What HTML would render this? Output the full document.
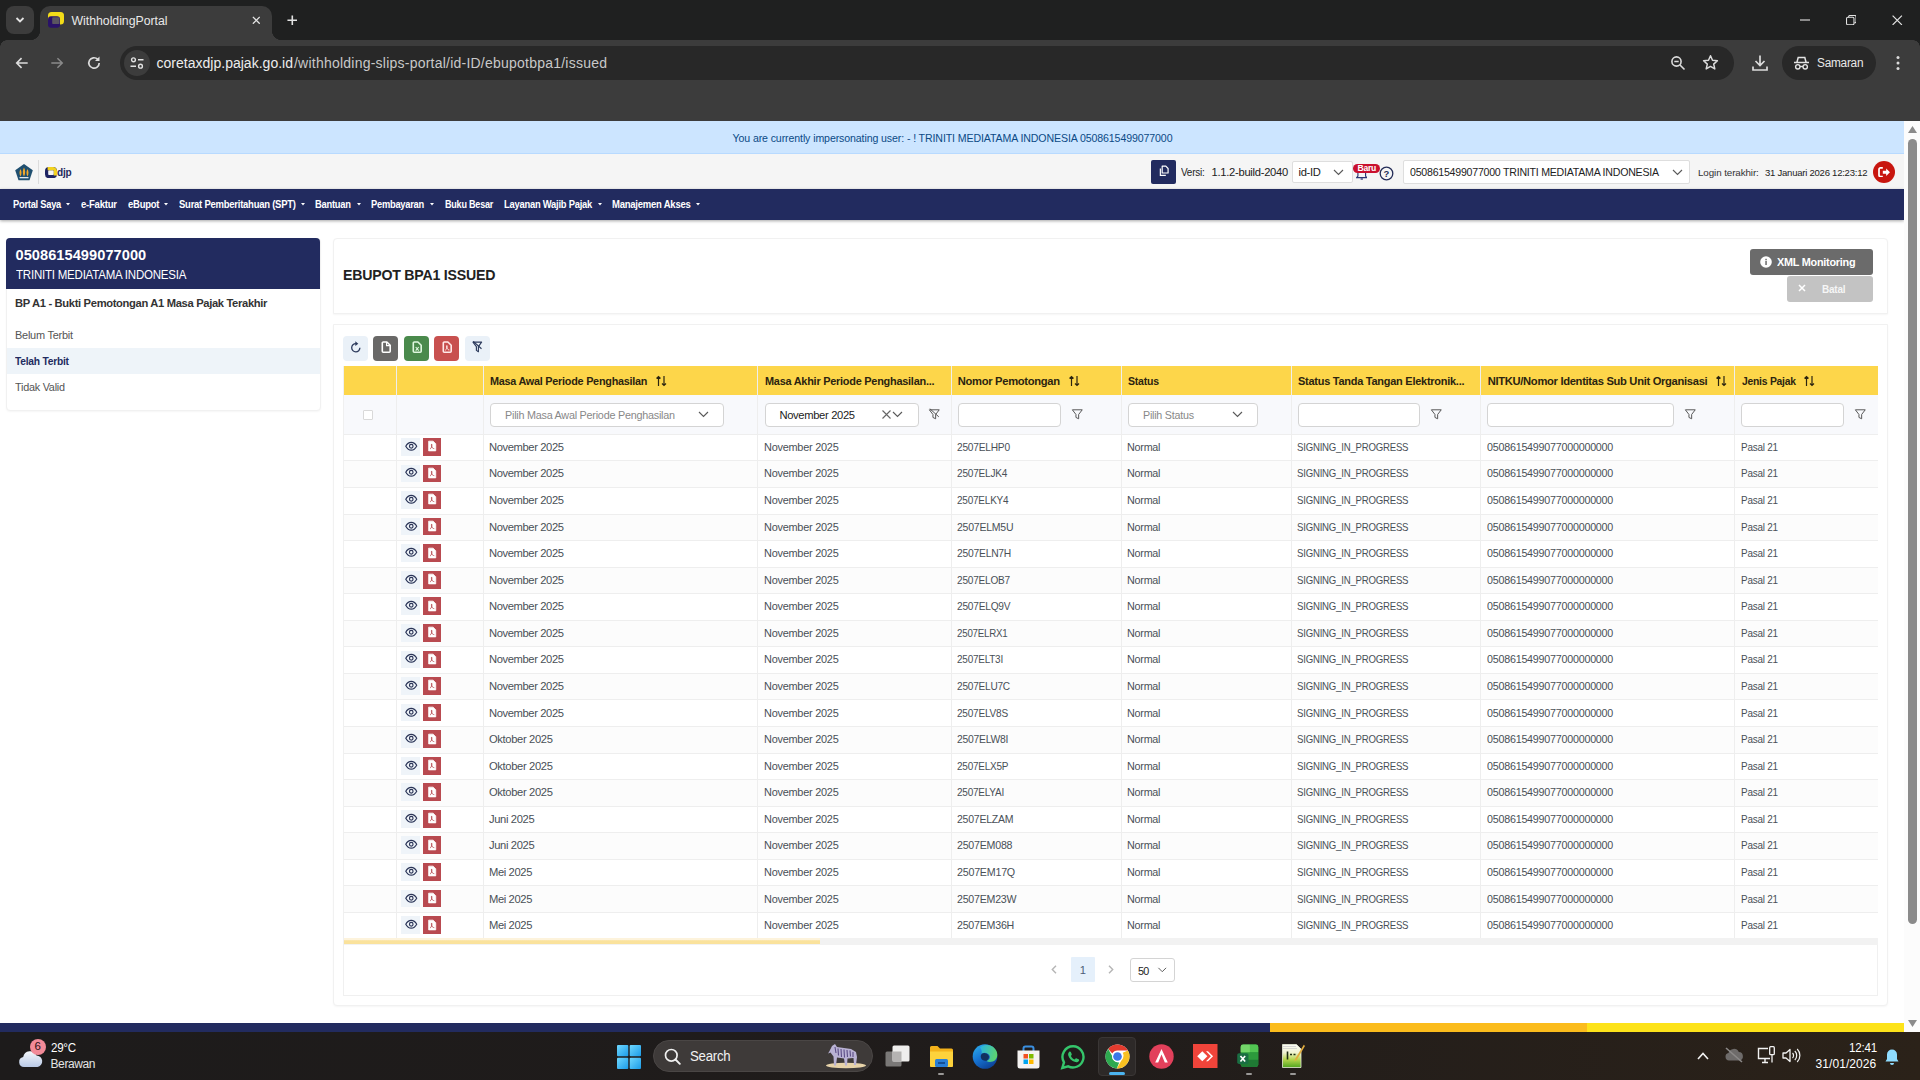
<!DOCTYPE html>
<html lang="id"><head><meta charset="utf-8"><title>WithholdingPortal</title>
<style>
*{box-sizing:border-box;margin:0;padding:0}
html,body{width:1920px;height:1080px;overflow:hidden;background:#fff;font-family:"Liberation Sans",sans-serif;}
body{position:relative}
.abs{position:absolute}
.t{position:absolute;white-space:nowrap;line-height:1}
/* chrome */
#tabstrip{position:absolute;left:0;top:0;width:1920px;height:40px;background:#1f2020}
#toolbar{position:absolute;left:0;top:40px;width:1920px;height:81px;background:#3c3c3c}
#tab{position:absolute;left:40px;top:6px;width:232px;height:34px;background:#3c3c3c;border-radius:10px 10px 0 0}
#tab:before,#tab:after{content:"";position:absolute;bottom:0;width:10px;height:10px;background:radial-gradient(circle at 0 0,transparent 10px,#3c3c3c 10.5px)}
#tab:before{left:-10px}
#tab:after{right:-10px;background:radial-gradient(circle at 100% 0,transparent 10px,#3c3c3c 10.5px)}
#tabsearch{position:absolute;left:6px;top:6px;width:28px;height:28px;border-radius:8px;background:#3c3c3c}
#omni{position:absolute;left:120px;top:46px;width:1614px;height:34px;border-radius:17px;background:#282828}
#siteinfo{position:absolute;left:124px;top:50px;width:26px;height:26px;border-radius:13px;background:#3c3c3c}
#profile{position:absolute;left:1782px;top:46px;width:94px;height:34px;border-radius:17px;background:#282828}
/* page */
#banner{position:absolute;left:0;top:121px;width:1904px;height:33px;background:#cce5ff;border-bottom:1px solid #b8daff}
#hdr{position:absolute;left:0;top:154px;width:1904px;height:35px;background:#f5f5f5}
#nav{position:absolute;left:0;top:189px;width:1904px;height:31px;background:#222b5f;box-shadow:0 1px 3px rgba(0,0,0,.35)}
#nav .t{color:#fff;font-weight:bold;font-size:10px;top:11.2px}
#sb{position:absolute;left:1904px;top:121px;width:16px;height:911px;background:#fcfcfc}
#sbthumb{position:absolute;left:4px;top:18px;width:9px;height:785px;border-radius:5px;background:#8b8b8b}
.card{position:absolute;background:#fff;border:1px solid #f1f1f1;border-radius:4px;box-shadow:0 1px 2px rgba(0,0,0,.04)}
.row{position:absolute;left:344px;width:1534px;height:26.6px;font-size:11.2px;color:#495057}
.row .c{position:absolute;top:7.5px;line-height:1;white-space:nowrap}
.c1{left:145px}.c2{left:420px}.c3{left:613px}.c4{left:783px}.c5{left:953px}.c6{left:1143px}.c7{left:1397px}
.eye{position:absolute;left:57.4px;top:3.6px;width:18.6px;height:17.8px;background:#eff4f9;display:flex;align-items:center;justify-content:center;padding:0 0 1.5px 1.5px}
.pdfb{position:absolute;left:79px;top:3.6px;width:18px;height:17.8px;background:#b94a50;display:flex;align-items:center;justify-content:center;padding-bottom:1.2px}
.vline{position:absolute;top:366px;width:1px;height:573px;background:#eeeeee}
.th{position:absolute;top:376px;font-size:11.2px;font-weight:bold;color:#2b2410;white-space:nowrap;line-height:1}
.inp{position:absolute;top:403px;height:24px;background:#fff;border:1px solid #d4d4d4;border-radius:4px}
.tbtn{position:absolute;top:336px;width:24.700px;height:24.700px;border-radius:4px}
/* taskbar */
#taskbar{position:absolute;left:0;top:1032px;width:1920px;height:48px;background:linear-gradient(90deg,#1d1b1b 0%,#201c1b 55%,#2b2219 100%)}
#taskbar .t{color:#fff}
.hl{position:absolute;left:344px;width:1534px;height:1px;background:#eeeeee}

</style></head><body>
<svg width="0" height="0" style="position:absolute"><defs>
<g id="eyei"><path d="M1 8C3 4.300 5.500 3 8 3s5 1.300 7 5c-2 3.700-4.500 5-7 5S3 11.700 1 8z" fill="none" stroke="#2b3558" stroke-width="1.500"/><circle cx="8" cy="8" r="2.300" fill="none" stroke="#2b3558" stroke-width="1.500"/></g>
<g id="pdfi"><path d="M3.500 1.500h6L13 5v9.500H3.500z" fill="#fff" stroke="#fff" stroke-width="1" stroke-linejoin="round"/><path d="M5.500 12c1.800-1.200 2.700-3.800 2.200-6.500-.7 0-.7 1.800 0 3.500.7 1.700 2 2.500 3.300 2.500" fill="none" stroke="#b2434a" stroke-width="1.100"/></g>
<g id="sorti"><path d="M3.500 12V2.500M1.500 4.500l2-2 2 2M9 2v9.500M7 9.500l2 2 2-2" fill="none" stroke="#2b2410" stroke-width="1.200"/></g>
<g id="filti"><path d="M1.500 2h11L8.500 7.200V12l-3-1.500V7.200z" fill="none" stroke="#555" stroke-width="1.100" stroke-linejoin="round"/></g>
<g id="chev"><path d="M1 1l4.500 4.500L10 1" fill="none" stroke="#5a5a5a" stroke-width="1.150"/></g>
</defs></svg>
<div id="tabstrip">
 <div id="tabsearch"><svg class="abs" style="left:9px;top:10px" width="10" height="8" viewBox="0 0 10 8"><path d="M1.500 2l3.500 3.500L8.500 2" fill="none" stroke="#e3e3e3" stroke-width="1.800"/></svg></div>
 <div id="tab">
  <svg class="abs" style="left:8px;top:5.700px" width="16" height="16" viewBox="0 0 16 16"><rect x="0" y="0" width="16" height="12.500" rx="3.500" fill="#f3dc18"/><rect x="0" y="4.300" width="12" height="11.500" rx="3" fill="#2a1268"/><rect x="4.200" y="5.200" width="7.300" height="6.800" rx="0.800" fill="#5a5560"/><path d="M11.500 4.800v7.500h3" stroke="#f3dc18" stroke-width="0" fill="none"/></svg>
  <span class="t" style="letter-spacing:-0.024px;left:31.500px;top:8.500px;font-size:12.300px;color:#e8e8e8">WithholdingPortal</span>
  <svg class="abs" style="left:211.700px;top:9.700px" width="8.600" height="8.600" viewBox="0 0 10 10"><path d="M1 1l8 8M9 1l-8 8" stroke="#e3e3e3" stroke-width="1.500"/></svg>
 </div>
 <svg class="abs" style="left:286.800px;top:14.900px" width="10.600" height="10.600" viewBox="0 0 12 12"><path d="M6 0.500v11M0.500 6h11" stroke="#e3e3e3" stroke-width="1.800"/></svg>
 <svg class="abs" style="left:1800px;top:19px" width="10" height="2" viewBox="0 0 10 2"><path d="M0 1h10" stroke="#e3e3e3" stroke-width="1.100"/></svg>
 <svg class="abs" style="left:1845.500px;top:14.500px" width="10.500" height="10.500" viewBox="0 0 12 12"><rect x="0.600" y="2.600" width="8.500" height="8.500" rx="1.500" fill="none" stroke="#e3e3e3" stroke-width="1.200"/><path d="M3 2.500V2a1.500 1.500 0 0 1 1.500-1.500H10A1.500 1.500 0 0 1 11.500 2v5.500A1.500 1.500 0 0 1 10 9h-.5" fill="none" stroke="#e3e3e3" stroke-width="1.200"/></svg>
 <svg class="abs" style="left:1892px;top:14.500px" width="10.500" height="10.500" viewBox="0 0 12 12"><path d="M0.700 0.700l10.600 10.600M11.300 0.700L0.700 11.300" stroke="#e3e3e3" stroke-width="1.400"/></svg>
</div>
<div id="toolbar"></div>
<div class="abs" style="left:0;top:40px;width:7px;height:7px;background:radial-gradient(circle at 100% 100%,transparent 6.500px,#1f2020 7px)"></div><div class="abs" style="left:1913px;top:40px;width:7px;height:7px;background:radial-gradient(circle at 0 100%,transparent 6.500px,#1f2020 7px)"></div>
<svg class="abs" style="left:15px;top:56px" width="14" height="14" viewBox="0 0 16 16"><path d="M14.500 8H2M7.500 2.500L2 8l5.500 5.500" fill="none" stroke="#dcdcdc" stroke-width="1.900"/></svg>
<svg class="abs" style="left:50px;top:56px" width="14" height="14" viewBox="0 0 16 16"><path d="M1.500 8H14M8.500 2.500L14 8l-5.500 5.500" fill="none" stroke="#8a8a8a" stroke-width="1.700"/></svg>
<svg class="abs" style="left:86px;top:55px" width="16" height="16" viewBox="0 0 16 16"><path d="M13.200 8A5.200 5.200 0 1 1 11.600 4.200" fill="none" stroke="#dcdcdc" stroke-width="1.700"/><path d="M13.500 1.500v4.500H9z" fill="#dcdcdc"/></svg>
<div id="omni"></div>
<div id="siteinfo"><svg class="abs" style="left:6px;top:6px" width="14" height="14" viewBox="0 0 14 14"><circle cx="3.500" cy="3.800" r="1.900" fill="none" stroke="#e3e3e3" stroke-width="1.400"/><path d="M8 3.800h5.500M0.500 10.200H6" stroke="#e3e3e3" stroke-width="1.400"/><circle cx="10.500" cy="10.200" r="1.900" fill="none" stroke="#e3e3e3" stroke-width="1.400"/></svg></div>
<span class="t" style="letter-spacing:0.014px;left:156.500px;top:56px;font-size:14px;color:#ededed">coretaxdjp.pajak.go.id</span><span class="t" style="letter-spacing:0.230px;left:294px;top:56px;font-size:14px;color:#c9c9c9">/withholding-slips-portal/id-ID/ebupotbpa1/issued</span>
<svg class="abs" style="left:1670px;top:55px" width="16" height="16" viewBox="0 0 16 16"><circle cx="6.500" cy="6.500" r="4.600" fill="none" stroke="#dcdcdc" stroke-width="1.600"/><path d="M10 10l4.500 4.500M4.300 6.500h4.400" stroke="#dcdcdc" stroke-width="1.600"/></svg>
<svg class="abs" style="left:1702px;top:54px" width="17" height="17" viewBox="0 0 17 17"><path d="M8.500 1.800l2 4.500 4.900.5-3.700 3.300 1.100 4.800-4.300-2.500-4.300 2.500 1.100-4.800L1.600 6.800l4.900-.5z" fill="none" stroke="#dcdcdc" stroke-width="1.500" stroke-linejoin="round"/></svg>
<svg class="abs" style="left:1751px;top:54px" width="18" height="18" viewBox="0 0 18 18"><path d="M9 1.500v9.500M4.500 7L9 11.500 13.500 7M2 12.500v3.500h14v-3.500" fill="none" stroke="#dcdcdc" stroke-width="1.700"/></svg>
<div id="profile">
 <svg class="abs" style="left:11px;top:9px" width="17" height="16" viewBox="0 0 17 16"><path d="M1 7.500h15M4 7l1.200-4.500h6.600L13 7" fill="none" stroke="#e3e3e3" stroke-width="1.500"/><circle cx="4.800" cy="11.800" r="2.200" fill="none" stroke="#e3e3e3" stroke-width="1.400"/><circle cx="12.200" cy="11.800" r="2.200" fill="none" stroke="#e3e3e3" stroke-width="1.400"/><path d="M7 11.500h3" stroke="#e3e3e3" stroke-width="1.400"/></svg>
 <span class="t" style="letter-spacing:-0.25px;transform-origin:0 0;transform:scaleX(0.9606);left:35px;top:10.500px;font-size:12.300px;color:#e8e8e8">Samaran</span>
</div>
<svg class="abs" style="left:1896px;top:55px" width="4" height="16" viewBox="0 0 4 16"><circle cx="2" cy="2.500" r="1.500" fill="#dcdcdc"/><circle cx="2" cy="8" r="1.500" fill="#dcdcdc"/><circle cx="2" cy="13.500" r="1.500" fill="#dcdcdc"/></svg>

<div id="banner"><span class="t" style="letter-spacing:-0.111px;left:732.500px;top:12px;font-size:10.600px;color:#0b4a86">You are currently impersonating user: - ! TRINITI MEDIATAMA INDONESIA 0508615499077000</span></div>
<div id="hdr"></div>
<!-- header logos -->
<svg class="abs" style="left:14.500px;top:164px" width="18" height="16.500" viewBox="0 0 18 16.500"><path d="M9 0L17.800 6.300 14.500 16.300H3.500L.200 6.300z" fill="#1f4f70"/><path d="M5.500 5c1.200 2 1.500 5 0 7.500-1.500-2.500-1.200-5.500 0-7.500zM9 3.500c1.400 2.500 1.700 6 0 9-1.700-3-1.400-6.500 0-9zM12.500 5c1.200 2 1.500 5 0 7.500-1.500-2.500-1.200-5.500 0-7.500z" fill="#f0a92c"/><rect x="4.500" y="13" width="9" height="1.300" fill="#dfe8ee"/></svg>
<div class="abs" style="left:38px;top:160px;width:1px;height:23.500px;background:#dcdcdc"></div>
<svg class="abs" style="left:45px;top:166.500px" width="12" height="11.300" viewBox="0 0 12 11.300"><rect x="1.600" y="1.700" width="8.800" height="7.900" rx="2.400" fill="none" stroke="#1d2363" stroke-width="3.200"/><path d="M2.600 1.700h5.400a2.400 2.400 0 0 1 2.400 2.400v4.400" fill="none" stroke="#f2d21f" stroke-width="3.200"/></svg>
<span class="t" style="letter-spacing:-0.25px;transform-origin:0 0;transform:scaleX(0.9574);left:57.300px;top:166.500px;font-size:10.500px;font-weight:bold;color:#23295e">djp</span>
<!-- header right -->
<div class="abs" style="left:1151px;top:160px;width:25px;height:24px;border-radius:2px;background:#222b5f"><svg class="abs" style="left:7.500px;top:5px" width="10" height="11.500" viewBox="0 0 11 12"><path d="M3.500 1h4l2.500 2.500V8.500h-6.500z" fill="none" stroke="#fff" stroke-width="1.300" stroke-linejoin="round"/><path d="M1.500 3.500V11H7.500" fill="none" stroke="#fff" stroke-width="1.300"/></svg></div>
<span class="t" style="letter-spacing:-0.25px;transform-origin:0 0;transform:scaleX(0.8902);left:1181px;top:167px;font-size:11.200px;color:#222">Versi:</span>
<span class="t" style="letter-spacing:-0.277px;left:1211.500px;top:167px;font-size:11.200px;color:#222">1.1.2-build-2040</span>
<div class="abs" style="left:1292px;top:161px;width:61px;height:22px;background:#fff;border:1px solid #dedede;border-radius:2px"><span class="t" style="letter-spacing:-0.306px;left:5.500px;top:5px;font-size:11.200px;color:#222">id-ID</span><svg class="abs" style="left:40px;top:7px" width="11" height="7" viewBox="0 0 11 7"><use href="#chev"/></svg></div>
<svg class="abs" style="left:1355.500px;top:166.700px" width="11.500" height="13.500" viewBox="0 0 12 14"><path d="M2 9.500V6a4 4 0 0 1 8 0v3.500l1.200 1.500H.8z" fill="none" stroke="#2a3572" stroke-width="1.200"/><path d="M4.800 12.500h2.400" stroke="#2a3572" stroke-width="1.300"/></svg>
<div class="abs" style="left:1353.300px;top:164px;width:26.300px;height:9px;border-radius:5px;background:#c9102e"><span class="t" style="left:4.300px;top:0px;font-size:8.600px;font-weight:bold;color:#fff;letter-spacing:-0.300px">Baru</span></div>
<svg class="abs" style="left:1379px;top:166px" width="15" height="15" viewBox="0 0 15 15"><circle cx="7.500" cy="7.500" r="6.300" fill="none" stroke="#242d58" stroke-width="1.300"/><text x="7.500" y="11" font-size="9.500" font-weight="bold" font-family="Liberation Sans,sans-serif" fill="#242d58" text-anchor="middle">?</text></svg>
<div class="abs" style="left:1403px;top:160px;width:287px;height:24px;background:#fff;border:1px solid #dedede;border-radius:2px"><span class="t" style="letter-spacing:-0.25px;transform-origin:0 0;transform:scaleX(0.9473);left:6px;top:6px;font-size:11.200px;color:#222">0508615499077000 TRINITI MEDIATAMA INDONESIA</span><svg class="abs" style="left:268px;top:8px" width="11" height="7" viewBox="0 0 11 7"><use href="#chev"/></svg></div>
<span class="t" style="letter-spacing:-0.092px;left:1698px;top:167.700px;font-size:9.800px;color:#333">Login terakhir:</span>
<span class="t" style="letter-spacing:-0.25px;transform-origin:0 0;transform:scaleX(0.9727);left:1764.500px;top:167.700px;font-size:9.800px;color:#222">31 Januari 2026 12:23:12</span>
<div class="abs" style="left:1873px;top:161px;width:21.500px;height:21.500px;border-radius:11px;background:#c8160f"><svg class="abs" style="left:4.500px;top:5.500px" width="12.500" height="10.500" viewBox="0 0 13 11"><path d="M5 1H2.500A1.500 1.500 0 0 0 1 2.500v6A1.500 1.500 0 0 0 2.500 10H5" fill="none" stroke="#fff" stroke-width="1.800"/><path d="M5 4h3.500V1.500L12.500 5.500 8.500 9.500V7H5z" fill="#fff"/></svg></div>
<!-- nav -->
<div id="nav">
<span class="t" style="letter-spacing:-0.25px;transform-origin:0 0;transform:scaleX(0.9291);left:12.5px">Portal Saya</span><svg class="abs" style="left:66.3px;top:14px" width="4" height="2.500" viewBox="0 0 5 3"><path d="M0 0h5L2.500 3z" fill="#fff"/></svg>
<span class="t" style="letter-spacing:-0.25px;transform-origin:0 0;transform:scaleX(0.9548);left:81.0px">e-Faktur</span>
<span class="t" style="letter-spacing:-0.25px;transform-origin:0 0;transform:scaleX(0.9487);left:127.5px">eBupot</span><svg class="abs" style="left:164.3px;top:14px" width="4" height="2.500" viewBox="0 0 5 3"><path d="M0 0h5L2.500 3z" fill="#fff"/></svg>
<span class="t" style="letter-spacing:-0.25px;transform-origin:0 0;transform:scaleX(0.9476);left:178.8px">Surat Pemberitahuan (SPT)</span><svg class="abs" style="left:301px;top:14px" width="4" height="2.500" viewBox="0 0 5 3"><path d="M0 0h5L2.500 3z" fill="#fff"/></svg>
<span class="t" style="letter-spacing:-0.25px;transform-origin:0 0;transform:scaleX(0.9351);left:315.3px">Bantuan</span><svg class="abs" style="left:357px;top:14px" width="4" height="2.500" viewBox="0 0 5 3"><path d="M0 0h5L2.500 3z" fill="#fff"/></svg>
<span class="t" style="letter-spacing:-0.25px;transform-origin:0 0;transform:scaleX(0.9295);left:371.3px">Pembayaran</span><svg class="abs" style="left:430px;top:14px" width="4" height="2.500" viewBox="0 0 5 3"><path d="M0 0h5L2.500 3z" fill="#fff"/></svg>
<span class="t" style="letter-spacing:-0.25px;transform-origin:0 0;transform:scaleX(0.9057);left:444.5px">Buku Besar</span>
<span class="t" style="letter-spacing:-0.25px;transform-origin:0 0;transform:scaleX(0.9377);left:503.8px">Layanan Wajib Pajak</span><svg class="abs" style="left:598.3px;top:14px" width="4" height="2.500" viewBox="0 0 5 3"><path d="M0 0h5L2.500 3z" fill="#fff"/></svg>
<span class="t" style="letter-spacing:-0.25px;transform-origin:0 0;transform:scaleX(0.9512);left:612.0px">Manajemen Akses</span><svg class="abs" style="left:696.3px;top:14px" width="4" height="2.500" viewBox="0 0 5 3"><path d="M0 0h5L2.500 3z" fill="#fff"/></svg>
</div>
<!-- scrollbar -->
<div id="sb"><div id="sbthumb"></div>
<svg class="abs" style="left:4px;top:5px" width="9" height="7" viewBox="0 0 9 7"><path d="M4.500 0L9 7H0z" fill="#8b8b8b"/></svg>
<svg class="abs" style="left:4px;top:899px" width="9" height="7" viewBox="0 0 9 7"><path d="M0 0h9L4.500 7z" fill="#8b8b8b"/></svg>
</div>
<!-- sidebar -->
<div class="card" style="left:6px;top:238px;width:315px;height:173px"></div>
<div class="abs" style="left:6px;top:238px;width:314px;height:50.700px;background:#222b5f;border-radius:4px 4px 0 0"></div>
<span class="t" style="letter-spacing:0.055px;left:15.500px;top:248px;font-size:14.600px;font-weight:bold;color:#fff">0508615499077000</span>
<span class="t" style="letter-spacing:-0.25px;transform-origin:0 0;transform:scaleX(0.9003);left:15.500px;top:268.500px;font-size:12.800px;color:#fff">TRINITI MEDIATAMA INDONESIA</span>
<span class="t" style="letter-spacing:-0.338px;left:15px;top:298px;font-size:11.200px;font-weight:bold;color:#333">BP A1 - Bukti Pemotongan A1 Masa Pajak Terakhir</span>
<span class="t" style="letter-spacing:-0.25px;transform-origin:0 0;transform:scaleX(0.9792);left:15px;top:329.500px;font-size:11.200px;color:#555">Belum Terbit</span>
<div class="abs" style="left:7px;top:348px;width:313px;height:26px;background:#eef4f9"></div>
<span class="t" style="letter-spacing:-0.25px;transform-origin:0 0;transform:scaleX(0.9153);left:15px;top:356px;font-size:11.200px;font-weight:bold;color:#222b5f">Telah Terbit</span>
<span class="t" style="letter-spacing:-0.25px;transform-origin:0 0;transform:scaleX(0.9688);left:15px;top:381.500px;font-size:11.200px;color:#555">Tidak Valid</span>
<!-- main cards -->
<div class="card" style="left:333px;top:238px;width:1555px;height:76px;border-radius:4px 4px 0 0"></div>
<div class="card" style="left:333px;top:324px;width:1555px;height:682px;border-radius:0 0 4px 4px"></div>
<div class="abs" style="left:343px;top:366px;width:1535px;height:630px;border:1px solid #f0f0f0;border-top:0"></div>
<span class="t" style="letter-spacing:-0.25px;transform-origin:0 0;transform:scaleX(0.9200);left:342.500px;top:267.200px;font-size:15.400px;font-weight:bold;color:#222">EBUPOT BPA1 ISSUED</span>
<div class="abs" style="left:1750px;top:249px;width:123px;height:25.800px;border-radius:3px;background:#6b6b6b"><svg class="abs" style="left:10px;top:7px" width="12" height="12" viewBox="0 0 12 12"><circle cx="6" cy="6" r="5.800" fill="#fff"/><rect x="5.300" y="5" width="1.500" height="4" fill="#6b6b6b"/><rect x="5.300" y="2.800" width="1.500" height="1.500" fill="#6b6b6b"/></svg><span class="t" style="letter-spacing:-0.25px;transform-origin:0 0;transform:scaleX(0.9696);left:26.500px;top:7.500px;font-size:11.200px;font-weight:bold;color:#fff">XML Monitoring</span></div>
<div class="abs" style="left:1787px;top:276px;width:86px;height:25.800px;border-radius:3px;background:#c3c3c3"><svg class="abs" style="left:11px;top:8px" width="8" height="8" viewBox="0 0 8 8"><path d="M1 1l6 6M7 1L1 7" stroke="#fff" stroke-width="1.500"/></svg><span class="t" style="letter-spacing:-0.25px;transform-origin:0 0;transform:scaleX(0.8915);left:35px;top:8px;font-size:11.200px;font-weight:bold;color:#f6f6f6">Batal</span></div>
<!-- toolbar buttons -->
<div class="tbtn" style="left:343px;background:#eaf1f8"><svg class="abs" style="left:7.600px;top:5.200px" width="10" height="11.600" viewBox="0 0 10 11.600"><path d="M8.900 6.800A4.100 4.100 0 1 1 4.900 2.700" fill="none" stroke="#2c3a5c" stroke-width="1.300"/><path d="M4.300 0.300L7.300 2.700 4.300 5.100z" fill="#2c3a5c"/></svg></div>
<div class="tbtn" style="left:373px;background:#696867"><svg class="abs" style="left:8.300px;top:4.700px" width="10.200" height="12.200" viewBox="0 0 10.200 12.200"><path d="M2.300 1h3.600l3.300 3.300v5.900a1 1 0 0 1-1 1H2.300a1 1 0 0 1-1-1V2a1 1 0 0 1 1-1z" fill="none" stroke="#fff" stroke-width="1.600" stroke-linejoin="round"/><path d="M5.600 1v3.600h3.600" fill="none" stroke="#fff" stroke-width="1.200"/></svg></div>
<div class="tbtn" style="left:404px;background:#4a8a4c"><svg class="abs" style="left:8.300px;top:4.700px" width="10.200" height="12.200" viewBox="0 0 10.200 12.200"><path d="M2.300 1h3.600l3.300 3.300v5.900a1 1 0 0 1-1 1H2.300a1 1 0 0 1-1-1V2a1 1 0 0 1 1-1z" fill="none" stroke="#dff7df" stroke-width="1.600" stroke-linejoin="round"/><path d="M3.700 6l3 3.600M6.700 6l-3 3.600" stroke="#dff7df" stroke-width="1.100"/></svg></div>
<div class="tbtn" style="left:434px;background:#c8504f"><svg class="abs" style="left:8.300px;top:4.700px" width="10.200" height="12.200" viewBox="0 0 10.200 12.200"><path d="M2.300 1h3.600l3.300 3.300v5.900a1 1 0 0 1-1 1H2.300a1 1 0 0 1-1-1V2a1 1 0 0 1 1-1z" fill="none" stroke="#ffe9e9" stroke-width="1.600" stroke-linejoin="round"/><path d="M3.300 9.300c1.300-.9 2-2.700 1.700-4.800-.5 0-.5 1.300 0 2.600.5 1.200 1.400 1.900 2.400 1.900" fill="none" stroke="#ffe9e9" stroke-width="1"/></svg></div>
<div class="tbtn" style="left:465px;background:#eaf1f8"><svg class="abs" style="left:6.600px;top:5px" width="11" height="11.800" viewBox="0 0 11 11.800"><path d="M1 1.200h8.600L6.400 5.600v5.200L4.400 9.400V5.600z" fill="none" stroke="#2c3a5c" stroke-width="1.150" stroke-linejoin="round"/><path d="M1.200 .400l8.300 7.400" stroke="#2c3a5c" stroke-width="1.150"/></svg></div>
<!-- table header -->
<div class="abs" style="left:344px;top:366px;width:1534px;height:29px;background:#fdd64a"></div>
<div class="abs" style="left:344px;top:395px;width:1534px;height:39.400px;background:#f8f9fc"></div>
<span class="th" style="letter-spacing:-0.25px;transform-origin:0 0;transform:scaleX(0.9677);left:489.7px">Masa Awal Periode Penghasilan</span><svg class="abs" style="left:654.5px;top:374.200px" width="13" height="14" viewBox="0 0 13 14"><use href="#sorti"/></svg>
<span class="th" style="letter-spacing:-0.25px;transform-origin:0 0;transform:scaleX(0.9755);left:764.7px">Masa Akhir Periode Penghasilan...</span>
<span class="th" style="letter-spacing:-0.300px;left:957.7px">Nomor Pemotongan</span><svg class="abs" style="left:1067.8px;top:374.200px" width="13" height="14" viewBox="0 0 13 14"><use href="#sorti"/></svg>
<span class="th" style="letter-spacing:-0.25px;transform-origin:0 0;transform:scaleX(0.9407);left:1127.7px">Status</span>
<span class="th" style="letter-spacing:-0.25px;transform-origin:0 0;transform:scaleX(0.9794);left:1297.7px">Status Tanda Tangan Elektronik...</span>
<span class="th" style="letter-spacing:-0.312px;left:1487.7px">NITKU/Nomor Identitas Sub Unit Organisasi</span><svg class="abs" style="left:1715.3px;top:374.200px" width="13" height="14" viewBox="0 0 13 14"><use href="#sorti"/></svg>
<span class="th" style="letter-spacing:-0.25px;transform-origin:0 0;transform:scaleX(0.9238);left:1741.7px">Jenis Pajak</span><svg class="abs" style="left:1802.8px;top:374.200px" width="13" height="14" viewBox="0 0 13 14"><use href="#sorti"/></svg>
<!-- filter row -->
<div class="abs" style="left:363px;top:410px;width:10px;height:10px;border:1px solid #d9d9d9;background:#fff;border-radius:1px"></div>
<div class="inp" style="left:490px;width:233.7px"><span class="t" style="letter-spacing:-0.25px;transform-origin:0 0;transform:scaleX(0.9659);left:13.500px;top:6px;font-size:11.200px;color:#888">Pilih Masa Awal Periode Penghasilan</span><svg class="abs" style="left:207px;top:7px" width="11" height="7" viewBox="0 0 11 7"><use href="#chev"/></svg></div>
<div class="inp" style="left:765px;width:153.5px"><span class="t" style="letter-spacing:-0.342px;left:13.500px;top:6px;font-size:11.200px;color:#222">November 2025</span><svg class="abs" style="left:116px;top:5.800px" width="9" height="9" viewBox="0 0 9 9"><path d="M.5.5l8 8M8.500.5l-8 8" stroke="#666" stroke-width="1.100"/></svg><svg class="abs" style="left:126px;top:7px" width="11" height="7" viewBox="0 0 11 7"><use href="#chev"/></svg></div>
<svg class="abs" style="left:927.8px;top:407.800px" width="12.600" height="12.600" viewBox="0 0 14 14"><use href="#filti"/><path d="M2 .8l10 9" stroke="#555" stroke-width="1.100"/></svg>
<div class="inp" style="left:958px;width:102.7px"></div><svg class="abs" style="left:1070.8px;top:407.800px" width="12.600" height="12.600" viewBox="0 0 14 14"><use href="#filti"/></svg>
<div class="inp" style="left:1128px;width:129.7px"><span class="t" style="letter-spacing:-0.25px;transform-origin:0 0;transform:scaleX(0.9583);left:14px;top:6px;font-size:11.200px;color:#888">Pilih Status</span><svg class="abs" style="left:103px;top:7px" width="11" height="7" viewBox="0 0 11 7"><use href="#chev"/></svg></div>
<div class="inp" style="left:1298px;width:121.7px"></div><svg class="abs" style="left:1429.8px;top:407.800px" width="12.600" height="12.600" viewBox="0 0 14 14"><use href="#filti"/></svg>
<div class="inp" style="left:1487px;width:186.7px"></div><svg class="abs" style="left:1683.8px;top:407.800px" width="12.600" height="12.600" viewBox="0 0 14 14"><use href="#filti"/></svg>
<div class="inp" style="left:1741px;width:102.7px"></div><svg class="abs" style="left:1853.8px;top:407.800px" width="12.600" height="12.600" viewBox="0 0 14 14"><use href="#filti"/></svg>
<div class="row" style="top:434.40px;background:#fff">
<span class="eye"><svg viewBox="0 0 16 16" width="12.5" height="12.5"><use href="#eyei"/></svg></span>
<span class="pdfb"><svg viewBox="0 0 16 16" width="12" height="12"><use href="#pdfi"/></svg></span>
<span class="c c1" style="letter-spacing:-0.385px;">November 2025</span><span class="c c2" style="letter-spacing:-0.25px;transform-origin:0 0;transform:scaleX(0.9751);">November 2025</span><span class="c c3" style="letter-spacing:-0.25px;transform-origin:0 0;transform:scaleX(0.9101);">2507ELHP0</span><span class="c c4" style="letter-spacing:-0.25px;transform-origin:0 0;transform:scaleX(0.9623);">Normal</span><span class="c c5" style="letter-spacing:-0.25px;transform-origin:0 0;transform:scaleX(0.8590);">SIGNING_IN_PROGRESS</span><span class="c c6" style="letter-spacing:-0.25px;transform-origin:0 0;transform:scaleX(0.9594);">0508615499077000000000</span><span class="c c7" style="letter-spacing:-0.25px;transform-origin:0 0;transform:scaleX(0.8852);">Pasal 21</span></div>
<div class="row" style="top:460.97px;background:#fcfcfc">
<span class="eye"><svg viewBox="0 0 16 16" width="12.5" height="12.5"><use href="#eyei"/></svg></span>
<span class="pdfb"><svg viewBox="0 0 16 16" width="12" height="12"><use href="#pdfi"/></svg></span>
<span class="c c1" style="letter-spacing:-0.385px;">November 2025</span><span class="c c2" style="letter-spacing:-0.25px;transform-origin:0 0;transform:scaleX(0.9751);">November 2025</span><span class="c c3" style="letter-spacing:-0.25px;transform-origin:0 0;transform:scaleX(0.9005);">2507ELJK4</span><span class="c c4" style="letter-spacing:-0.25px;transform-origin:0 0;transform:scaleX(0.9623);">Normal</span><span class="c c5" style="letter-spacing:-0.25px;transform-origin:0 0;transform:scaleX(0.8590);">SIGNING_IN_PROGRESS</span><span class="c c6" style="letter-spacing:-0.25px;transform-origin:0 0;transform:scaleX(0.9594);">0508615499077000000000</span><span class="c c7" style="letter-spacing:-0.25px;transform-origin:0 0;transform:scaleX(0.8852);">Pasal 21</span></div>
<div class="row" style="top:487.53px;background:#fff">
<span class="eye"><svg viewBox="0 0 16 16" width="12.5" height="12.5"><use href="#eyei"/></svg></span>
<span class="pdfb"><svg viewBox="0 0 16 16" width="12" height="12"><use href="#pdfi"/></svg></span>
<span class="c c1" style="letter-spacing:-0.385px;">November 2025</span><span class="c c2" style="letter-spacing:-0.25px;transform-origin:0 0;transform:scaleX(0.9751);">November 2025</span><span class="c c3" style="letter-spacing:-0.25px;transform-origin:0 0;transform:scaleX(0.8940);">2507ELKY4</span><span class="c c4" style="letter-spacing:-0.25px;transform-origin:0 0;transform:scaleX(0.9623);">Normal</span><span class="c c5" style="letter-spacing:-0.25px;transform-origin:0 0;transform:scaleX(0.8590);">SIGNING_IN_PROGRESS</span><span class="c c6" style="letter-spacing:-0.25px;transform-origin:0 0;transform:scaleX(0.9594);">0508615499077000000000</span><span class="c c7" style="letter-spacing:-0.25px;transform-origin:0 0;transform:scaleX(0.8852);">Pasal 21</span></div>
<div class="row" style="top:514.10px;background:#fcfcfc">
<span class="eye"><svg viewBox="0 0 16 16" width="12.5" height="12.5"><use href="#eyei"/></svg></span>
<span class="pdfb"><svg viewBox="0 0 16 16" width="12" height="12"><use href="#pdfi"/></svg></span>
<span class="c c1" style="letter-spacing:-0.385px;">November 2025</span><span class="c c2" style="letter-spacing:-0.25px;transform-origin:0 0;transform:scaleX(0.9751);">November 2025</span><span class="c c3" style="letter-spacing:-0.25px;transform-origin:0 0;transform:scaleX(0.9385);">2507ELM5U</span><span class="c c4" style="letter-spacing:-0.25px;transform-origin:0 0;transform:scaleX(0.9623);">Normal</span><span class="c c5" style="letter-spacing:-0.25px;transform-origin:0 0;transform:scaleX(0.8590);">SIGNING_IN_PROGRESS</span><span class="c c6" style="letter-spacing:-0.25px;transform-origin:0 0;transform:scaleX(0.9594);">0508615499077000000000</span><span class="c c7" style="letter-spacing:-0.25px;transform-origin:0 0;transform:scaleX(0.8852);">Pasal 21</span></div>
<div class="row" style="top:540.67px;background:#fff">
<span class="eye"><svg viewBox="0 0 16 16" width="12.5" height="12.5"><use href="#eyei"/></svg></span>
<span class="pdfb"><svg viewBox="0 0 16 16" width="12" height="12"><use href="#pdfi"/></svg></span>
<span class="c c1" style="letter-spacing:-0.385px;">November 2025</span><span class="c c2" style="letter-spacing:-0.25px;transform-origin:0 0;transform:scaleX(0.9751);">November 2025</span><span class="c c3" style="letter-spacing:-0.25px;transform-origin:0 0;transform:scaleX(0.9211);">2507ELN7H</span><span class="c c4" style="letter-spacing:-0.25px;transform-origin:0 0;transform:scaleX(0.9623);">Normal</span><span class="c c5" style="letter-spacing:-0.25px;transform-origin:0 0;transform:scaleX(0.8590);">SIGNING_IN_PROGRESS</span><span class="c c6" style="letter-spacing:-0.25px;transform-origin:0 0;transform:scaleX(0.9594);">0508615499077000000000</span><span class="c c7" style="letter-spacing:-0.25px;transform-origin:0 0;transform:scaleX(0.8852);">Pasal 21</span></div>
<div class="row" style="top:567.24px;background:#fcfcfc">
<span class="eye"><svg viewBox="0 0 16 16" width="12.5" height="12.5"><use href="#eyei"/></svg></span>
<span class="pdfb"><svg viewBox="0 0 16 16" width="12" height="12"><use href="#pdfi"/></svg></span>
<span class="c c1" style="letter-spacing:-0.385px;">November 2025</span><span class="c c2" style="letter-spacing:-0.25px;transform-origin:0 0;transform:scaleX(0.9751);">November 2025</span><span class="c c3" style="letter-spacing:-0.25px;transform-origin:0 0;transform:scaleX(0.9005);">2507ELOB7</span><span class="c c4" style="letter-spacing:-0.25px;transform-origin:0 0;transform:scaleX(0.9623);">Normal</span><span class="c c5" style="letter-spacing:-0.25px;transform-origin:0 0;transform:scaleX(0.8590);">SIGNING_IN_PROGRESS</span><span class="c c6" style="letter-spacing:-0.25px;transform-origin:0 0;transform:scaleX(0.9594);">0508615499077000000000</span><span class="c c7" style="letter-spacing:-0.25px;transform-origin:0 0;transform:scaleX(0.8852);">Pasal 21</span></div>
<div class="row" style="top:593.80px;background:#fff">
<span class="eye"><svg viewBox="0 0 16 16" width="12.5" height="12.5"><use href="#eyei"/></svg></span>
<span class="pdfb"><svg viewBox="0 0 16 16" width="12" height="12"><use href="#pdfi"/></svg></span>
<span class="c c1" style="letter-spacing:-0.385px;">November 2025</span><span class="c c2" style="letter-spacing:-0.25px;transform-origin:0 0;transform:scaleX(0.9751);">November 2025</span><span class="c c3" style="letter-spacing:-0.25px;transform-origin:0 0;transform:scaleX(0.9073);">2507ELQ9V</span><span class="c c4" style="letter-spacing:-0.25px;transform-origin:0 0;transform:scaleX(0.9623);">Normal</span><span class="c c5" style="letter-spacing:-0.25px;transform-origin:0 0;transform:scaleX(0.8590);">SIGNING_IN_PROGRESS</span><span class="c c6" style="letter-spacing:-0.25px;transform-origin:0 0;transform:scaleX(0.9594);">0508615499077000000000</span><span class="c c7" style="letter-spacing:-0.25px;transform-origin:0 0;transform:scaleX(0.8852);">Pasal 21</span></div>
<div class="row" style="top:620.37px;background:#fcfcfc">
<span class="eye"><svg viewBox="0 0 16 16" width="12.5" height="12.5"><use href="#eyei"/></svg></span>
<span class="pdfb"><svg viewBox="0 0 16 16" width="12" height="12"><use href="#pdfi"/></svg></span>
<span class="c c1" style="letter-spacing:-0.385px;">November 2025</span><span class="c c2" style="letter-spacing:-0.25px;transform-origin:0 0;transform:scaleX(0.9751);">November 2025</span><span class="c c3" style="letter-spacing:-0.25px;transform-origin:0 0;transform:scaleX(0.8707);">2507ELRX1</span><span class="c c4" style="letter-spacing:-0.25px;transform-origin:0 0;transform:scaleX(0.9623);">Normal</span><span class="c c5" style="letter-spacing:-0.25px;transform-origin:0 0;transform:scaleX(0.8590);">SIGNING_IN_PROGRESS</span><span class="c c6" style="letter-spacing:-0.25px;transform-origin:0 0;transform:scaleX(0.9594);">0508615499077000000000</span><span class="c c7" style="letter-spacing:-0.25px;transform-origin:0 0;transform:scaleX(0.8852);">Pasal 21</span></div>
<div class="row" style="top:646.94px;background:#fff">
<span class="eye"><svg viewBox="0 0 16 16" width="12.5" height="12.5"><use href="#eyei"/></svg></span>
<span class="pdfb"><svg viewBox="0 0 16 16" width="12" height="12"><use href="#pdfi"/></svg></span>
<span class="c c1" style="letter-spacing:-0.385px;">November 2025</span><span class="c c2" style="letter-spacing:-0.25px;transform-origin:0 0;transform:scaleX(0.9751);">November 2025</span><span class="c c3" style="letter-spacing:-0.25px;transform-origin:0 0;transform:scaleX(0.8901);">2507ELT3I</span><span class="c c4" style="letter-spacing:-0.25px;transform-origin:0 0;transform:scaleX(0.9623);">Normal</span><span class="c c5" style="letter-spacing:-0.25px;transform-origin:0 0;transform:scaleX(0.8590);">SIGNING_IN_PROGRESS</span><span class="c c6" style="letter-spacing:-0.25px;transform-origin:0 0;transform:scaleX(0.9594);">0508615499077000000000</span><span class="c c7" style="letter-spacing:-0.25px;transform-origin:0 0;transform:scaleX(0.8852);">Pasal 21</span></div>
<div class="row" style="top:673.50px;background:#fcfcfc">
<span class="eye"><svg viewBox="0 0 16 16" width="12.5" height="12.5"><use href="#eyei"/></svg></span>
<span class="pdfb"><svg viewBox="0 0 16 16" width="12" height="12"><use href="#pdfi"/></svg></span>
<span class="c c1" style="letter-spacing:-0.385px;">November 2025</span><span class="c c2" style="letter-spacing:-0.25px;transform-origin:0 0;transform:scaleX(0.9751);">November 2025</span><span class="c c3" style="letter-spacing:-0.25px;transform-origin:0 0;transform:scaleX(0.9007);">2507ELU7C</span><span class="c c4" style="letter-spacing:-0.25px;transform-origin:0 0;transform:scaleX(0.9623);">Normal</span><span class="c c5" style="letter-spacing:-0.25px;transform-origin:0 0;transform:scaleX(0.8590);">SIGNING_IN_PROGRESS</span><span class="c c6" style="letter-spacing:-0.25px;transform-origin:0 0;transform:scaleX(0.9594);">0508615499077000000000</span><span class="c c7" style="letter-spacing:-0.25px;transform-origin:0 0;transform:scaleX(0.8852);">Pasal 21</span></div>
<div class="row" style="top:700.07px;background:#fff">
<span class="eye"><svg viewBox="0 0 16 16" width="12.5" height="12.5"><use href="#eyei"/></svg></span>
<span class="pdfb"><svg viewBox="0 0 16 16" width="12" height="12"><use href="#pdfi"/></svg></span>
<span class="c c1" style="letter-spacing:-0.385px;">November 2025</span><span class="c c2" style="letter-spacing:-0.25px;transform-origin:0 0;transform:scaleX(0.9751);">November 2025</span><span class="c c3" style="letter-spacing:-0.25px;transform-origin:0 0;transform:scaleX(0.8982);">2507ELV8S</span><span class="c c4" style="letter-spacing:-0.25px;transform-origin:0 0;transform:scaleX(0.9623);">Normal</span><span class="c c5" style="letter-spacing:-0.25px;transform-origin:0 0;transform:scaleX(0.8590);">SIGNING_IN_PROGRESS</span><span class="c c6" style="letter-spacing:-0.25px;transform-origin:0 0;transform:scaleX(0.9594);">0508615499077000000000</span><span class="c c7" style="letter-spacing:-0.25px;transform-origin:0 0;transform:scaleX(0.8852);">Pasal 21</span></div>
<div class="row" style="top:726.64px;background:#fcfcfc">
<span class="eye"><svg viewBox="0 0 16 16" width="12.5" height="12.5"><use href="#eyei"/></svg></span>
<span class="pdfb"><svg viewBox="0 0 16 16" width="12" height="12"><use href="#pdfi"/></svg></span>
<span class="c c1" style="letter-spacing:-0.357px;">Oktober 2025</span><span class="c c2" style="letter-spacing:-0.25px;transform-origin:0 0;transform:scaleX(0.9751);">November 2025</span><span class="c c3" style="letter-spacing:-0.25px;transform-origin:0 0;transform:scaleX(0.9256);">2507ELW8I</span><span class="c c4" style="letter-spacing:-0.25px;transform-origin:0 0;transform:scaleX(0.9623);">Normal</span><span class="c c5" style="letter-spacing:-0.25px;transform-origin:0 0;transform:scaleX(0.8590);">SIGNING_IN_PROGRESS</span><span class="c c6" style="letter-spacing:-0.25px;transform-origin:0 0;transform:scaleX(0.9594);">0508615499077000000000</span><span class="c c7" style="letter-spacing:-0.25px;transform-origin:0 0;transform:scaleX(0.8852);">Pasal 21</span></div>
<div class="row" style="top:753.20px;background:#fff">
<span class="eye"><svg viewBox="0 0 16 16" width="12.5" height="12.5"><use href="#eyei"/></svg></span>
<span class="pdfb"><svg viewBox="0 0 16 16" width="12" height="12"><use href="#pdfi"/></svg></span>
<span class="c c1" style="letter-spacing:-0.357px;">Oktober 2025</span><span class="c c2" style="letter-spacing:-0.25px;transform-origin:0 0;transform:scaleX(0.9751);">November 2025</span><span class="c c3" style="letter-spacing:-0.25px;transform-origin:0 0;transform:scaleX(0.8923);">2507ELX5P</span><span class="c c4" style="letter-spacing:-0.25px;transform-origin:0 0;transform:scaleX(0.9623);">Normal</span><span class="c c5" style="letter-spacing:-0.25px;transform-origin:0 0;transform:scaleX(0.8590);">SIGNING_IN_PROGRESS</span><span class="c c6" style="letter-spacing:-0.25px;transform-origin:0 0;transform:scaleX(0.9594);">0508615499077000000000</span><span class="c c7" style="letter-spacing:-0.25px;transform-origin:0 0;transform:scaleX(0.8852);">Pasal 21</span></div>
<div class="row" style="top:779.77px;background:#fcfcfc">
<span class="eye"><svg viewBox="0 0 16 16" width="12.5" height="12.5"><use href="#eyei"/></svg></span>
<span class="pdfb"><svg viewBox="0 0 16 16" width="12" height="12"><use href="#pdfi"/></svg></span>
<span class="c c1" style="letter-spacing:-0.357px;">Oktober 2025</span><span class="c c2" style="letter-spacing:-0.25px;transform-origin:0 0;transform:scaleX(0.9751);">November 2025</span><span class="c c3" style="letter-spacing:-0.25px;transform-origin:0 0;transform:scaleX(0.8932);">2507ELYAI</span><span class="c c4" style="letter-spacing:-0.25px;transform-origin:0 0;transform:scaleX(0.9623);">Normal</span><span class="c c5" style="letter-spacing:-0.25px;transform-origin:0 0;transform:scaleX(0.8590);">SIGNING_IN_PROGRESS</span><span class="c c6" style="letter-spacing:-0.25px;transform-origin:0 0;transform:scaleX(0.9594);">0508615499077000000000</span><span class="c c7" style="letter-spacing:-0.25px;transform-origin:0 0;transform:scaleX(0.8852);">Pasal 21</span></div>
<div class="row" style="top:806.34px;background:#fff">
<span class="eye"><svg viewBox="0 0 16 16" width="12.5" height="12.5"><use href="#eyei"/></svg></span>
<span class="pdfb"><svg viewBox="0 0 16 16" width="12" height="12"><use href="#pdfi"/></svg></span>
<span class="c c1" style="letter-spacing:-0.352px;">Juni 2025</span><span class="c c2" style="letter-spacing:-0.25px;transform-origin:0 0;transform:scaleX(0.9751);">November 2025</span><span class="c c3" style="letter-spacing:-0.25px;transform-origin:0 0;transform:scaleX(0.9404);">2507ELZAM</span><span class="c c4" style="letter-spacing:-0.25px;transform-origin:0 0;transform:scaleX(0.9623);">Normal</span><span class="c c5" style="letter-spacing:-0.25px;transform-origin:0 0;transform:scaleX(0.8590);">SIGNING_IN_PROGRESS</span><span class="c c6" style="letter-spacing:-0.25px;transform-origin:0 0;transform:scaleX(0.9594);">0508615499077000000000</span><span class="c c7" style="letter-spacing:-0.25px;transform-origin:0 0;transform:scaleX(0.8852);">Pasal 21</span></div>
<div class="row" style="top:832.90px;background:#fcfcfc">
<span class="eye"><svg viewBox="0 0 16 16" width="12.5" height="12.5"><use href="#eyei"/></svg></span>
<span class="pdfb"><svg viewBox="0 0 16 16" width="12" height="12"><use href="#pdfi"/></svg></span>
<span class="c c1" style="letter-spacing:-0.352px;">Juni 2025</span><span class="c c2" style="letter-spacing:-0.25px;transform-origin:0 0;transform:scaleX(0.9751);">November 2025</span><span class="c c3" style="letter-spacing:-0.25px;transform-origin:0 0;transform:scaleX(0.9513);">2507EM088</span><span class="c c4" style="letter-spacing:-0.25px;transform-origin:0 0;transform:scaleX(0.9623);">Normal</span><span class="c c5" style="letter-spacing:-0.25px;transform-origin:0 0;transform:scaleX(0.8590);">SIGNING_IN_PROGRESS</span><span class="c c6" style="letter-spacing:-0.25px;transform-origin:0 0;transform:scaleX(0.9594);">0508615499077000000000</span><span class="c c7" style="letter-spacing:-0.25px;transform-origin:0 0;transform:scaleX(0.8852);">Pasal 21</span></div>
<div class="row" style="top:859.47px;background:#fff">
<span class="eye"><svg viewBox="0 0 16 16" width="12.5" height="12.5"><use href="#eyei"/></svg></span>
<span class="pdfb"><svg viewBox="0 0 16 16" width="12" height="12"><use href="#pdfi"/></svg></span>
<span class="c c1" style="letter-spacing:-0.381px;">Mei 2025</span><span class="c c2" style="letter-spacing:-0.25px;transform-origin:0 0;transform:scaleX(0.9751);">November 2025</span><span class="c c3" style="letter-spacing:-0.25px;transform-origin:0 0;transform:scaleX(0.9568);">2507EM17Q</span><span class="c c4" style="letter-spacing:-0.25px;transform-origin:0 0;transform:scaleX(0.9623);">Normal</span><span class="c c5" style="letter-spacing:-0.25px;transform-origin:0 0;transform:scaleX(0.8590);">SIGNING_IN_PROGRESS</span><span class="c c6" style="letter-spacing:-0.25px;transform-origin:0 0;transform:scaleX(0.9594);">0508615499077000000000</span><span class="c c7" style="letter-spacing:-0.25px;transform-origin:0 0;transform:scaleX(0.8852);">Pasal 21</span></div>
<div class="row" style="top:886.04px;background:#fcfcfc">
<span class="eye"><svg viewBox="0 0 16 16" width="12.5" height="12.5"><use href="#eyei"/></svg></span>
<span class="pdfb"><svg viewBox="0 0 16 16" width="12" height="12"><use href="#pdfi"/></svg></span>
<span class="c c1" style="letter-spacing:-0.381px;">Mei 2025</span><span class="c c2" style="letter-spacing:-0.25px;transform-origin:0 0;transform:scaleX(0.9751);">November 2025</span><span class="c c3" style="letter-spacing:-0.25px;transform-origin:0 0;transform:scaleX(0.9492);">2507EM23W</span><span class="c c4" style="letter-spacing:-0.25px;transform-origin:0 0;transform:scaleX(0.9623);">Normal</span><span class="c c5" style="letter-spacing:-0.25px;transform-origin:0 0;transform:scaleX(0.8590);">SIGNING_IN_PROGRESS</span><span class="c c6" style="letter-spacing:-0.25px;transform-origin:0 0;transform:scaleX(0.9594);">0508615499077000000000</span><span class="c c7" style="letter-spacing:-0.25px;transform-origin:0 0;transform:scaleX(0.8852);">Pasal 21</span></div>
<div class="row" style="top:912.61px;background:#fff">
<span class="eye"><svg viewBox="0 0 16 16" width="12.5" height="12.5"><use href="#eyei"/></svg></span>
<span class="pdfb"><svg viewBox="0 0 16 16" width="12" height="12"><use href="#pdfi"/></svg></span>
<span class="c c1" style="letter-spacing:-0.381px;">Mei 2025</span><span class="c c2" style="letter-spacing:-0.25px;transform-origin:0 0;transform:scaleX(0.9751);">November 2025</span><span class="c c3" style="letter-spacing:-0.25px;transform-origin:0 0;transform:scaleX(0.9518);">2507EM36H</span><span class="c c4" style="letter-spacing:-0.25px;transform-origin:0 0;transform:scaleX(0.9623);">Normal</span><span class="c c5" style="letter-spacing:-0.25px;transform-origin:0 0;transform:scaleX(0.8590);">SIGNING_IN_PROGRESS</span><span class="c c6" style="letter-spacing:-0.25px;transform-origin:0 0;transform:scaleX(0.9594);">0508615499077000000000</span><span class="c c7" style="letter-spacing:-0.25px;transform-origin:0 0;transform:scaleX(0.8852);">Pasal 21</span></div>
<div class="hl" style="top:433.80px"></div><div class="hl" style="top:460.37px"></div><div class="hl" style="top:486.93px"></div><div class="hl" style="top:513.50px"></div><div class="hl" style="top:540.07px"></div><div class="hl" style="top:566.63px"></div><div class="hl" style="top:593.20px"></div><div class="hl" style="top:619.77px"></div><div class="hl" style="top:646.34px"></div><div class="hl" style="top:672.90px"></div><div class="hl" style="top:699.47px"></div><div class="hl" style="top:726.04px"></div><div class="hl" style="top:752.60px"></div><div class="hl" style="top:779.17px"></div><div class="hl" style="top:805.74px"></div><div class="hl" style="top:832.31px"></div><div class="hl" style="top:858.87px"></div><div class="hl" style="top:885.44px"></div><div class="hl" style="top:912.01px"></div>
<div class="vline" style="left:396px"></div><div class="vline" style="left:483px"></div><div class="vline" style="left:757px"></div><div class="vline" style="left:951px"></div><div class="vline" style="left:1121px"></div><div class="vline" style="left:1291px"></div><div class="vline" style="left:1480px"></div><div class="vline" style="left:1734px"></div>
<!-- hscroll -->
<div class="abs" style="left:344px;top:938px;width:1534px;height:6.500px;background:#f2f2f2"></div>
<div class="abs" style="left:344px;top:938px;width:475.500px;height:6px;background:linear-gradient(#fdf3dc 0,#fdf3dc 30%,#fae29c 45%,#fae29c 100%)"></div>
<!-- paginator -->
<svg class="abs" style="left:1051px;top:965px" width="6" height="9" viewBox="0 0 6 9"><path d="M5 .800L1.300 4.500 5 8.200" fill="none" stroke="#b5b5b5" stroke-width="1.400"/></svg>
<div class="abs" style="left:1070.500px;top:957.400px;width:24.200px;height:25px;background:#e5f0fb;border-radius:1px"><span class="t" style="left:9.200px;top:7.500px;font-size:11.200px;color:#4c5d78">1</span></div>
<svg class="abs" style="left:1107.500px;top:965px" width="6" height="9" viewBox="0 0 6 9"><path d="M1 .800L4.700 4.500 1 8.200" fill="none" stroke="#b5b5b5" stroke-width="1.400"/></svg>
<div class="abs" style="left:1130px;top:958px;width:44.500px;height:24px;border:1px solid #d4d4d4;border-radius:3px;background:#fff"><span class="t" style="letter-spacing:-0.716px;left:7px;top:6.800px;font-size:10.800px;color:#222">50</span><svg class="abs" style="left:26px;top:8px" width="10.500" height="6" viewBox="0 0 11 7"><use href="#chev"/></svg></div>
<!-- footer strip -->
<div class="abs" style="left:0;top:1023px;width:1270px;height:9px;background:#222b5f"></div>
<div class="abs" style="left:1270px;top:1023px;width:317px;height:9px;background:#fbbc1c"></div>
<div class="abs" style="left:1587px;top:1023px;width:317px;height:9px;background:#fde31a"></div>

<div id="taskbar">
<!-- weather -->
<svg class="abs" style="left:18px;top:14px" width="26" height="22" viewBox="0 0 26 22"><defs><linearGradient id="cl" x1="0" y1="0" x2="0" y2="1"><stop offset="0" stop-color="#f4f7fb"/><stop offset="1" stop-color="#b9c9e6"/></linearGradient></defs><path d="M6 21a5 5 0 0 1-.8-9.900A7 7 0 0 1 18.500 9.500 5.800 5.800 0 0 1 19.500 21z" fill="url(#cl)"/></svg>
<div class="abs" style="left:29.500px;top:6.500px;width:16px;height:16px;border-radius:8px;background:#f28a98"></div>
<span class="t" style="left:34.500px;top:8.500px;font-size:11.500px;color:#2a1216">6</span>
<span class="t" style="letter-spacing:-0.25px;transform-origin:0 0;transform:scaleX(0.9631);left:50.500px;top:9.500px;font-size:12px">29°C</span>
<span class="t" style="letter-spacing:-0.396px;left:50.500px;top:26px;font-size:12px;color:#e4e4e4">Berawan</span>
<!-- start -->
<svg class="abs" style="left:616.500px;top:12.500px" width="24" height="24" viewBox="0 0 24 24"><defs><linearGradient id="wg" x1="0" y1="0" x2="1" y2="1"><stop offset="0" stop-color="#6fd8ff"/><stop offset="1" stop-color="#1b9be8"/></linearGradient></defs><rect x="0" y="0" width="11.300" height="11.300" rx="1" fill="url(#wg)"/><rect x="12.700" y="0" width="11.300" height="11.300" rx="1" fill="url(#wg)"/><rect x="0" y="12.700" width="11.300" height="11.300" rx="1" fill="url(#wg)"/><rect x="12.700" y="12.700" width="11.300" height="11.300" rx="1" fill="url(#wg)"/></svg>
<!-- search -->
<div class="abs" style="left:653px;top:8px;width:220px;height:32px;border-radius:16px;background:#3e3a39;border:1px solid #4a4645"></div>
<svg class="abs" style="left:664px;top:16px" width="17" height="17" viewBox="0 0 17 17"><circle cx="7.300" cy="7.300" r="5.800" fill="none" stroke="#f0f0f0" stroke-width="1.700"/><path d="M11.500 11.500l4.300 4.300" stroke="#f0f0f0" stroke-width="1.900" stroke-linecap="round"/></svg>
<span class="t" style="letter-spacing:-0.25px;transform-origin:0 0;transform:scaleX(0.9441);left:689.500px;top:17px;font-size:14px;color:#f2f2f2">Search</span>
<!-- zebra -->
<svg class="abs" style="left:824px;top:9px" width="44" height="28" viewBox="0 0 44 28"><ellipse cx="22" cy="24.500" rx="20" ry="2.800" fill="#e7d3a9"/><path d="M5 11l3-6 3-2 2 3 14 2 5 3 1 5-1 8h-2l-.5-7-6 .5-.5 7h-2l-1-7-7-1-1 8h-2l-.5-9-3-4-2.500 1z" fill="#b9b2d4"/><path d="M11 6l1 6M14 7.500l.5 7M17 8l.5 8M20 8.500l.5 8M23 9l.5 7M26 9.500l.5 6M29 11v5" stroke="#5b4d86" stroke-width="1.100" fill="none"/></svg>
<!-- task view -->
<svg class="abs" style="left:885px;top:12.500px" width="25" height="23" viewBox="0 0 25 23"><rect x="0.500" y="6.500" width="16" height="15" rx="1.500" fill="#7a7877"/><rect x="7.500" y="0.500" width="17" height="16" rx="1.500" fill="#efeeed"/><rect x="7.500" y="6.500" width="9" height="10" fill="#b5b3b2"/></svg>
<!-- explorer -->
<svg class="abs" style="left:929px;top:12.500px" width="25" height="23" viewBox="0 0 25 23"><path d="M1 2.500A1.500 1.500 0 0 1 2.500 1h6l2.500 2.500h11.500A1.500 1.500 0 0 1 24 5v15.500A1.500 1.500 0 0 1 22.500 22h-20A1.500 1.500 0 0 1 1 20.500z" fill="#f3b21b"/><path d="M1 6.500h23v14A1.500 1.500 0 0 1 22.500 22h-20A1.500 1.500 0 0 1 1 20.500z" fill="#fdd23c"/><rect x="6" y="14" width="13" height="8" rx="1.500" fill="#2a7fd6"/><rect x="9" y="17" width="7" height="2" fill="#154f94"/></svg>
<div class="abs" style="left:937.500px;top:40.800px;width:6.500px;height:2.500px;border-radius:1.500px;background:#9a9897"></div>
<!-- edge -->
<svg class="abs" style="left:972px;top:12px" width="26" height="25" viewBox="0 0 26 25"><defs><linearGradient id="eg" x1="0" y1="0" x2="0.600" y2="1"><stop offset="0" stop-color="#2fb4ee"/><stop offset="0.550" stop-color="#1673d2"/><stop offset="1" stop-color="#0d449a"/></linearGradient><linearGradient id="eg2" x1="0" y1="0.300" x2="1" y2="0.600"><stop offset="0" stop-color="#2cb6dc"/><stop offset="1" stop-color="#5fd46a"/></linearGradient></defs><circle cx="13" cy="12.500" r="12.300" fill="url(#eg)"/><path d="M8 3.500C11 .500 17 -.300 21.500 3.200c4.500 3.800 5 9.800 1.500 13-2 1.800-6.500 2.300-8.500.800 3-.8 4-3.500 3-5.500-1.300-2.500-5-3.500-8-1.800C10 7.500 9.500 5 8 3.500z" fill="url(#eg2)"/><path d="M9.800 9.800c2.200-1.300 5.200-.7 6.600 1.300 1.200 1.900.5 4.600-1.900 5.600-2.500.5-4.800-.7-5.500-2.700-.5-1.500-.2-3 .8-4.200z" fill="#12315f"/></svg>
<!-- store -->
<svg class="abs" style="left:1017px;top:12px" width="23" height="25" viewBox="0 0 23 25"><path d="M6.500 7V4.500A2 2 0 0 1 8.500 2.500h6a2 2 0 0 1 2 2V7" fill="none" stroke="#3a8fe0" stroke-width="2"/><path d="M.500 6.500h22V22A2.500 2.500 0 0 1 20 24.500H3A2.500 2.500 0 0 1 .500 22z" fill="#f4f2f1"/><rect x="6.500" y="10" width="4.500" height="4.500" fill="#f25022"/><rect x="12" y="10" width="4.500" height="4.500" fill="#7fba00"/><rect x="6.500" y="15.500" width="4.500" height="4.500" fill="#00a4ef"/><rect x="12" y="15.500" width="4.500" height="4.500" fill="#ffb900"/></svg>
<!-- whatsapp -->
<svg class="abs" style="left:1060px;top:12px" width="26" height="26" viewBox="0 0 26 26"><path d="M13.200 2.300A10.600 10.600 0 0 0 4 18.300L2.300 24l5.900-1.600A10.600 10.600 0 1 0 13.200 2.300z" fill="#1f1c1b" stroke="#35c56b" stroke-width="2.400"/><path d="M9.300 7.800c.5-.5 1.200-.4 1.500.2l.9 2c.2.500 0 .9-.3 1.300l-.5.600c.9 1.700 2.100 2.800 3.800 3.600l.7-.8c.3-.4.800-.5 1.300-.3l1.900.9c.6.300.7 1 .3 1.600-.8 1.100-2.200 1.600-3.600 1.200-3.800-1.100-6.200-3.500-7.100-6.900-.3-1.300.2-2.600 1.100-3.400z" fill="#35c56b"/></svg>
<!-- chrome active -->
<div class="abs" style="left:1098px;top:4.500px;width:38px;height:39.500px;border-radius:4px;background:#2d2928;border:1px solid #3a3635"></div>
<svg class="abs" style="left:1104.500px;top:12px" width="25" height="25" viewBox="0 0 48 48"><circle cx="24" cy="24" r="23" fill="#fff"/><path d="M24 1a23 23 0 0 1 19.900 11.500H24a11.500 11.500 0 0 0-10 5.800L6.200 9.400A23 23 0 0 1 24 1z" fill="#e33b2e"/><path d="M43.900 12.500A23 23 0 0 1 22.500 47l9.500-16.500a11.500 11.500 0 0 0 2-13.500z" fill="#f9c020"/><path d="M22.500 47A23 23 0 0 1 6.200 9.400L14 23.500a11.500 11.500 0 0 0 13.500 11.600z" fill="#2da94f"/><circle cx="24" cy="24" r="10.500" fill="#fff"/><circle cx="24" cy="24" r="8.300" fill="#3b78e7"/></svg>
<div class="abs" style="left:1109px;top:40px;width:16px;height:3px;border-radius:1.500px;background:#4cb4f0"></div>
<!-- red A -->
<svg class="abs" style="left:1149px;top:12px" width="25" height="25" viewBox="0 0 25 25"><circle cx="12.500" cy="12.500" r="12.200" fill="#e2405b"/><path d="M12.500 5l6.300 13.500h-3L12.500 10.500 9.200 18.500h-3z" fill="#fff"/></svg>
<!-- anydesk -->
<svg class="abs" style="left:1193px;top:11.800px" width="24.500" height="24.500" viewBox="0 0 25 25"><rect width="25" height="25" fill="#f0443a"/><path d="M9.500 7.300l5.200 5.200-5.200 5.200-5.200-5.200z" fill="#fff"/><path d="M13.300 7.300h2l5.200 5.200-5.200 5.200h-2l5-5.200z" fill="#fff"/></svg>
<!-- excel -->
<svg class="abs" style="left:1236.500px;top:12.300px" width="22" height="23.500" viewBox="0 0 22 24"><rect x="3.500" y="0.500" width="18" height="23" rx="2.500" fill="#2f9e3f"/><path d="M3.500 3A2.500 2.500 0 0 1 6 .500h7v8H3.500z" fill="#74d66a"/><path d="M13 .500h6A2.500 2.500 0 0 1 21.500 3v5.500H13z" fill="#52c552"/><rect x="13" y="8.500" width="8.500" height="7.500" fill="#2c9a3c"/><path d="M3.500 16h18v5A2.500 2.500 0 0 1 19 23.500H6A2.500 2.500 0 0 1 3.500 21z" fill="#1f7a34"/><rect x="0" y="9.500" width="11.500" height="11" rx="1.800" fill="#1a6e43"/><path d="M3.300 12.300l4.800 5.600M8.100 12.300l-4.800 5.600" stroke="#fff" stroke-width="1.700"/></svg>
<div class="abs" style="left:1246px;top:40.800px;width:6px;height:2.500px;border-radius:1.500px;background:#9a9897"></div>
<!-- notepad -->
<svg class="abs" style="left:1281.500px;top:11.800px" width="23" height="24" viewBox="0 0 23 24"><defs><linearGradient id="np" x1="0" y1="0" x2="0" y2="1"><stop offset="0" stop-color="#fbfbf6"/><stop offset="0.350" stop-color="#f1f3d2"/><stop offset="0.650" stop-color="#b7d64d"/><stop offset="1" stop-color="#4fa51f"/></linearGradient></defs><path d="M.500.500h14l4.500 4.500v18.500H.500z" fill="url(#np)" stroke="#e9eed8" stroke-width="0.800"/><path d="M1 2.500h13M1 4.500h14" stroke="#c9c9c9" stroke-width="0.700"/><path d="M5.500 7.500v8" stroke="#1f2d12" stroke-width="1.600"/><path d="M8 10.500h2M11.500 10.500h2" stroke="#1f2d12" stroke-width="1.300"/><path d="M21.800.800l-8.300 13.500-1 3.200 2.600-2.200L23 2z" fill="#e2ad3f"/></svg>
<div class="abs" style="left:1290px;top:40.800px;width:6px;height:2.500px;border-radius:1.500px;background:#9a9897"></div>
<!-- tray -->
<svg class="abs" style="left:1696.500px;top:19.500px" width="12" height="8" viewBox="0 0 12 8"><path d="M1 7l5-5.500L11 7" fill="none" stroke="#f2f2f2" stroke-width="1.600"/></svg>
<svg class="abs" style="left:1724px;top:15px" width="20" height="16" viewBox="0 0 20 16"><path d="M5 13.500a3.800 3.800 0 0 1-.5-7.500A5.500 5.500 0 0 1 14.800 5 4.300 4.300 0 0 1 15.500 13.500z" fill="#6e6b6a"/><path d="M2 1l16 14" stroke="#8c8988" stroke-width="1.600"/></svg>
<svg class="abs" style="left:1757px;top:14px" width="18" height="18" viewBox="0 0 18 18"><path d="M11 2.500H1.500v10H13" fill="none" stroke="#f2f2f2" stroke-width="1.400"/><path d="M5 16.500h6M8 12.500v4" stroke="#f2f2f2" stroke-width="1.400"/><rect x="12.700" y="0.700" width="4.600" height="8" rx="1" fill="none" stroke="#f2f2f2" stroke-width="1.300"/><path d="M15 8.700v7.800" stroke="#f2f2f2" stroke-width="1.300"/></svg>
<svg class="abs" style="left:1781.500px;top:15.500px" width="19" height="15" viewBox="0 0 19 15"><path d="M1 5h3l4-3.500v12L4 10H1z" fill="none" stroke="#f2f2f2" stroke-width="1.300" stroke-linejoin="round"/><path d="M10.500 5a3.500 3.500 0 0 1 0 5M12.800 3a6.300 6.300 0 0 1 0 9M15.200 1a9.200 9.200 0 0 1 0 13" fill="none" stroke="#f2f2f2" stroke-width="1.200"/></svg>
<span class="t" style="letter-spacing:-0.25px;transform-origin:0 0;transform:scaleX(0.9679);left:1848.500px;top:9.500px;font-size:12px">12:41</span>
<span class="t" style="letter-spacing:0.082px;left:1815.500px;top:26px;font-size:12px">31/01/2026</span>
<svg class="abs" style="left:1885px;top:16.500px" width="14" height="16" viewBox="0 0 14 16"><path d="M7 .500a5 5 0 0 1 5 5v4.500l1.500 2.500H.500L2 10V5.500a5 5 0 0 1 5-5z" fill="#8fdcff"/><path d="M5 14h4a2 2 0 0 1-4 0z" fill="#8fdcff"/></svg>
</div>

</body></html>
